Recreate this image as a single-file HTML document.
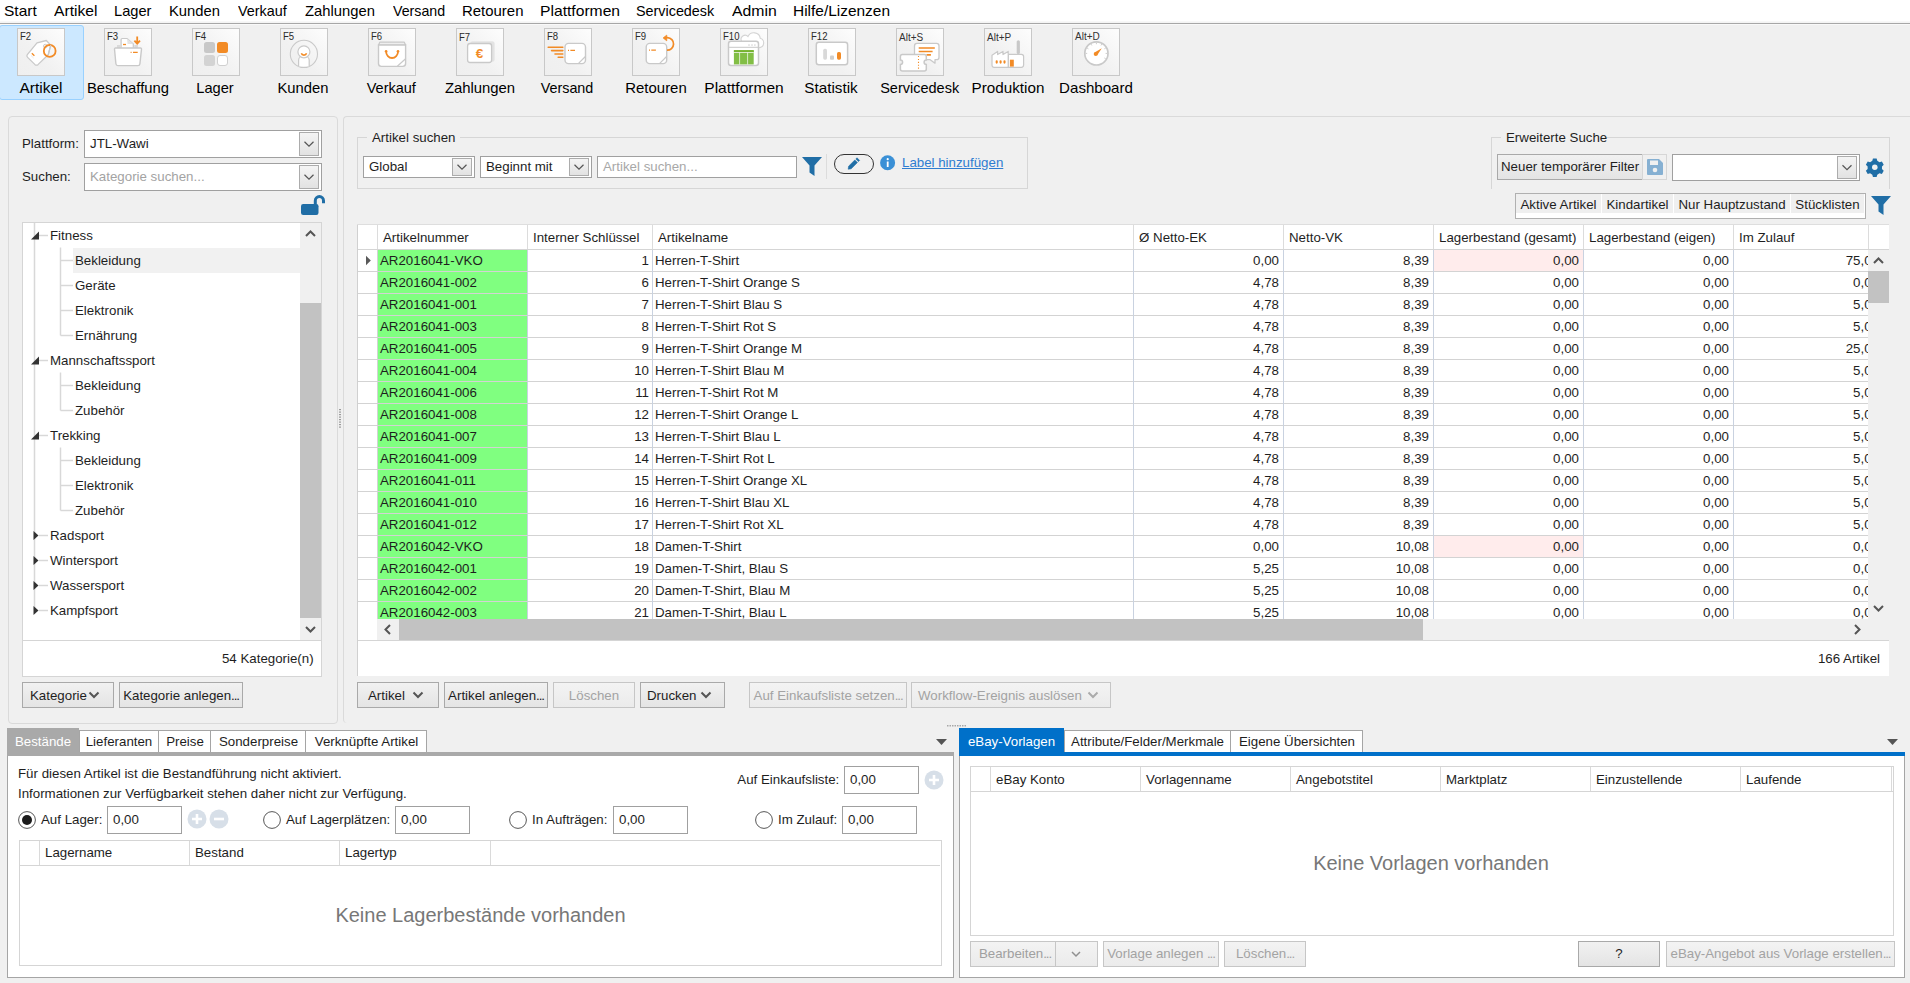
<!DOCTYPE html><html><head><meta charset="utf-8"><style>
html,body{margin:0;padding:0;}
body{width:1910px;height:983px;position:relative;overflow:hidden;background:#f0f0f0;font-family:"Liberation Sans",sans-serif;}
.a{position:absolute;}
.t{position:absolute;white-space:nowrap;font-family:"Liberation Sans",sans-serif;}
svg{overflow:visible}
</style></head><body>
<div class="a" style="left:0px;top:0px;width:1910px;height:23px;background:#fff;"></div>
<div class="a" style="left:0px;top:21px;width:1910px;height:2px;background:linear-gradient(#fafafa,#f2f2f2);"></div>
<div class="a" style="left:0px;top:23px;width:1910px;height:1px;background:#a7a7a7;"></div>
<div class="a" style="left:0px;top:24px;width:1910px;height:1px;background:#f9f9f9;"></div>
<div class="t" style="left:4px;top:4.02px;font-size:14.5px;line-height:14.5px;color:#000;transform:scaleX(1.07);transform-origin:0 0;">Start</div>
<div class="t" style="left:54px;top:4.02px;font-size:14.5px;line-height:14.5px;color:#000;transform:scaleX(1.08);transform-origin:0 0;">Artikel</div>
<div class="t" style="left:114px;top:4.02px;font-size:14.5px;line-height:14.5px;color:#000;transform:scaleX(1.01);transform-origin:0 0;">Lager</div>
<div class="t" style="left:169.4px;top:4.02px;font-size:14.5px;line-height:14.5px;color:#000;transform:scaleX(1.02);transform-origin:0 0;">Kunden</div>
<div class="t" style="left:238px;top:4.02px;font-size:14.5px;line-height:14.5px;color:#000;transform:scaleX(0.99);transform-origin:0 0;">Verkauf</div>
<div class="t" style="left:305px;top:4.02px;font-size:14.5px;line-height:14.5px;color:#000;transform:scaleX(1.02);transform-origin:0 0;">Zahlungen</div>
<div class="t" style="left:393px;top:4.02px;font-size:14.5px;line-height:14.5px;color:#000;transform:scaleX(0.98);transform-origin:0 0;">Versand</div>
<div class="t" style="left:462px;top:4.02px;font-size:14.5px;line-height:14.5px;color:#000;transform:scaleX(1.03);transform-origin:0 0;">Retouren</div>
<div class="t" style="left:540px;top:4.02px;font-size:14.5px;line-height:14.5px;color:#000;transform:scaleX(1.08);transform-origin:0 0;">Plattformen</div>
<div class="t" style="left:636px;top:4.02px;font-size:14.5px;line-height:14.5px;color:#000;transform:scaleX(0.99);transform-origin:0 0;">Servicedesk</div>
<div class="t" style="left:732px;top:4.02px;font-size:14.5px;line-height:14.5px;color:#000;transform:scaleX(1.09);transform-origin:0 0;">Admin</div>
<div class="t" style="left:793px;top:4.02px;font-size:14.5px;line-height:14.5px;color:#000;transform:scaleX(1.065);transform-origin:0 0;">Hilfe/Lizenzen</div>
<div class="a" style="left:-1px;top:25px;width:83px;height:73px;background:#cce8ff;border:1px solid #99d1ff;border-radius:3px;"></div>
<div class="a" style="left:17px;top:28px;width:46px;height:46px;background:linear-gradient(to bottom left,#fdfdfd,#f1f1f1 60%,#efefef);border:1px solid #c8c8c8;"></div>
<svg class="a" style="left:17px;top:28px" width="48" height="48" viewBox="0 0 48 48"><path d="M10.3 26.6 L20 14.8 L29.3 12.5 L33.7 17.1 L31.2 26.8 L21.2 36.4 Q19.5 37.9 17.8 36.4 L10.6 29.4 Q9.2 28 10.3 26.6 Z" fill="#fff" stroke="#c9c9c9" stroke-width="1.3" stroke-linejoin="round"/><circle cx="28.3" cy="18.1" r="1.8" fill="none" stroke="#c9c9c9" stroke-width="1"/><path d="M14.8 25.2 L17.4 27.7" stroke="#f28b26" stroke-width="1.3"/><path d="M14 27.5 L16.6 30" stroke="#e2e2e2" stroke-width="0.8"/><circle cx="32.7" cy="22.9" r="5.9" fill="none" stroke="#f28b26" stroke-width="1.8"/><path d="M33.7 17.1 L31.2 26.8" stroke="#c9c9c9" stroke-width="1.2"/></svg>
<div class="t" style="left:20.3px;top:31.02px;font-size:10.6px;line-height:10.6px;color:#2a2a2a;transform:scaleX(0.9);transform-origin:0 0;">F2</div>
<div class="t" style="left:-258.8px;width:600px;top:80.62px;font-size:14.5px;line-height:14.5px;color:#000;text-align:center;transform:scaleX(1.07);transform-origin:50% 0;">Artikel</div>
<div class="a" style="left:104px;top:28px;width:46px;height:46px;background:linear-gradient(to bottom left,#fdfdfd,#f1f1f1 60%,#efefef);border:1px solid #c8c8c8;"></div>
<svg class="a" style="left:104px;top:28px" width="48" height="48" viewBox="0 0 48 48"><path d="M17.1 19.8 V11.5 a1 1 0 0 1 1 -1 h5 l6.2 5.6 V19.8" fill="#fff" stroke="#c9c9c9" stroke-width="1.2"/><path d="M23.1 10.6 L23.5 16.1 L29.3 16.1 Z" fill="#e4e4e4"/><path d="M19 16.5 h3" stroke="#f28b26" stroke-width="1.3"/><rect x="13" y="17" width="3.6" height="3" fill="#dadada"/><rect x="30.3" y="17" width="3.6" height="3" fill="#dadada"/><path d="M33.2 8.5 V15 M30.4 12.6 L33.2 15.6 L36 12.6" fill="none" stroke="#f28b26" stroke-width="1.8"/><path d="M11.5 20 h25 a1 1 0 0 1 1 1.2 l-1.6 14.6 a2 2 0 0 1 -2 1.8 h-20 a2 2 0 0 1 -2 -1.8 l-1.4 -14.6 a1 1 0 0 1 1 -1.2 z" fill="#fff" stroke="#c9c9c9" stroke-width="1.4"/><path d="M26.6 24.4 h1 M29 24.4 h4.7" stroke="#f28b26" stroke-width="1.4"/></svg>
<div class="t" style="left:107.3px;top:31.02px;font-size:10.6px;line-height:10.6px;color:#2a2a2a;transform:scaleX(0.9);transform-origin:0 0;">F3</div>
<div class="t" style="left:-172.2px;width:600px;top:80.62px;font-size:14.5px;line-height:14.5px;color:#000;text-align:center;transform:scaleX(1.02);transform-origin:50% 0;">Beschaffung</div>
<div class="a" style="left:192px;top:28px;width:46px;height:46px;background:linear-gradient(to bottom left,#fdfdfd,#f1f1f1 60%,#efefef);border:1px solid #c8c8c8;"></div>
<svg class="a" style="left:192px;top:28px" width="48" height="48" viewBox="0 0 48 48"><rect x="12" y="14" width="11" height="11" rx="2.5" fill="#c8c8c8"/><rect x="25" y="14" width="11" height="11" rx="2.5" fill="#f28b26"/><rect x="12" y="27" width="11" height="11" rx="2.5" fill="#d3d3d3"/><rect x="25.5" y="27.5" width="10" height="10" rx="2.5" fill="#fff" stroke="#d0d0d0" stroke-width="1"/></svg>
<div class="t" style="left:195.3px;top:31.02px;font-size:10.6px;line-height:10.6px;color:#2a2a2a;transform:scaleX(0.9);transform-origin:0 0;">F4</div>
<div class="t" style="left:-85.0px;width:600px;top:80.62px;font-size:14.5px;line-height:14.5px;color:#000;text-align:center;transform:scaleX(1.01);transform-origin:50% 0;">Lager</div>
<div class="a" style="left:280px;top:28px;width:46px;height:46px;background:linear-gradient(to bottom left,#fdfdfd,#f1f1f1 60%,#efefef);border:1px solid #c8c8c8;"></div>
<svg class="a" style="left:280px;top:28px" width="48" height="48" viewBox="0 0 48 48"><circle cx="23.9" cy="25.9" r="13.6" fill="none" stroke="#c9c9c9" stroke-width="1.1"/><path d="M18.6 38.2 V32 a5.3 4 0 0 1 10.6 0 V38.2" fill="#fff" stroke="#c9c9c9" stroke-width="1.2"/><circle cx="23.9" cy="23.8" r="6" fill="#fff" stroke="#c9c9c9" stroke-width="1.2"/><path d="M21.4 25.3 a2.6 2.3 0 0 0 5.1 0" fill="none" stroke="#f28b26" stroke-width="1.6"/></svg>
<div class="t" style="left:283.3px;top:31.02px;font-size:10.6px;line-height:10.6px;color:#2a2a2a;transform:scaleX(0.9);transform-origin:0 0;">F5</div>
<div class="t" style="left:3.3999999999999773px;width:600px;top:80.62px;font-size:14.5px;line-height:14.5px;color:#000;text-align:center;transform:scaleX(1.02);transform-origin:50% 0;">Kunden</div>
<div class="a" style="left:368px;top:28px;width:46px;height:46px;background:linear-gradient(to bottom left,#fdfdfd,#f1f1f1 60%,#efefef);border:1px solid #c8c8c8;"></div>
<svg class="a" style="left:368px;top:28px" width="48" height="48" viewBox="0 0 48 48"><path d="M11.8 14.2 h24.5 l1.3 2.9 h-27.1 z" fill="#eee" stroke="#c9c9c9" stroke-width="1.2" stroke-linejoin="round"/><path d="M10.5 17 h27.1 v18.6 a2.8 2.8 0 0 1 -2.8 2.8 h-21.5 a2.8 2.8 0 0 1 -2.8 -2.8 z" fill="#fff" stroke="#c9c9c9" stroke-width="1.4"/><path d="M29.3 38.2 L37.3 31" stroke="#c9c9c9" stroke-width="1.2"/><path d="M18.1 23.4 a5.95 6.6 0 0 0 11.9 0" fill="none" stroke="#f28b26" stroke-width="1.8"/><circle cx="18.1" cy="23.3" r="1.3" fill="#f28b26"/><circle cx="30" cy="23.3" r="1.3" fill="#f28b26"/></svg>
<div class="t" style="left:371.3px;top:31.02px;font-size:10.6px;line-height:10.6px;color:#2a2a2a;transform:scaleX(0.9);transform-origin:0 0;">F6</div>
<div class="t" style="left:91.30000000000001px;width:600px;top:80.62px;font-size:14.5px;line-height:14.5px;color:#000;text-align:center;transform:scaleX(1.0);transform-origin:50% 0;">Verkauf</div>
<div class="a" style="left:456px;top:28px;width:46px;height:46px;background:linear-gradient(to bottom left,#fdfdfd,#f1f1f1 60%,#efefef);border:1px solid #c8c8c8;"></div>
<svg class="a" style="left:456px;top:28px" width="48" height="48" viewBox="0 0 48 48"><rect x="14.2" y="13.2" width="24.4" height="20.5" rx="2.5" fill="#e3e3e3"/><rect x="11.6" y="15.5" width="24" height="19" rx="2.5" fill="#fff" stroke="#c9c9c9" stroke-width="1.3"/><text x="23.4" y="29.6" font-family="Liberation Sans" font-weight="bold" font-size="13.5" fill="#f28b26" text-anchor="middle">€</text></svg>
<div class="t" style="left:459.3px;top:31.72px;font-size:10.6px;line-height:10.6px;color:#2a2a2a;transform:scaleX(0.9);transform-origin:0 0;">F7</div>
<div class="t" style="left:179.5px;width:600px;top:80.62px;font-size:14.5px;line-height:14.5px;color:#000;text-align:center;transform:scaleX(1.025);transform-origin:50% 0;">Zahlungen</div>
<div class="a" style="left:544px;top:28px;width:46px;height:46px;background:linear-gradient(to bottom left,#fdfdfd,#f1f1f1 60%,#efefef);border:1px solid #c8c8c8;"></div>
<svg class="a" style="left:544px;top:28px" width="48" height="48" viewBox="0 0 48 48"><path d="M4.2 19.3 h14.6 M7.6 22.6 h11.2 M11 26 h7.8 M14.2 29.3 h4.6" stroke="#f28b26" stroke-width="1.6" stroke-linecap="round"/><rect x="21" y="15.4" width="20.5" height="20.2" rx="3.6" fill="#fff" stroke="#c9c9c9" stroke-width="1.4"/><path d="M34.3 35.6 L41.4 28.5" stroke="#c9c9c9" stroke-width="1.2"/><path d="M24 22.4 h1 M26.4 22.4 h4.6" stroke="#f28b26" stroke-width="1.3"/></svg>
<div class="t" style="left:547.3px;top:31.02px;font-size:10.6px;line-height:10.6px;color:#2a2a2a;transform:scaleX(0.9);transform-origin:0 0;">F8</div>
<div class="t" style="left:267.20000000000005px;width:600px;top:80.62px;font-size:14.5px;line-height:14.5px;color:#000;text-align:center;transform:scaleX(0.99);transform-origin:50% 0;">Versand</div>
<div class="a" style="left:632px;top:28px;width:46px;height:46px;background:linear-gradient(to bottom left,#fdfdfd,#f1f1f1 60%,#efefef);border:1px solid #c8c8c8;"></div>
<svg class="a" style="left:632px;top:28px" width="48" height="48" viewBox="0 0 48 48"><rect x="14.2" y="15.4" width="20.5" height="20.2" rx="3.6" fill="#fff" stroke="#c9c9c9" stroke-width="1.4"/><path d="M27.5 35.6 L34.6 28.5" stroke="#c9c9c9" stroke-width="1.2"/><path d="M17 22.2 h1 M19.3 22.2 h4.6" stroke="#f28b26" stroke-width="1.3"/><path d="M35 22.2 A6.3 6.3 0 0 0 35.5 9.6 L33.5 9.7" fill="none" stroke="#f28b26" stroke-width="1.7"/><path d="M31 9.9 L34.8 7 L34.8 12.9 Z" fill="#f28b26" stroke="#f28b26" stroke-width="0.6" stroke-linejoin="round"/></svg>
<div class="t" style="left:635.3px;top:31.02px;font-size:10.6px;line-height:10.6px;color:#2a2a2a;transform:scaleX(0.9);transform-origin:0 0;">F9</div>
<div class="t" style="left:355.5px;width:600px;top:80.62px;font-size:14.5px;line-height:14.5px;color:#000;text-align:center;transform:scaleX(1.03);transform-origin:50% 0;">Retouren</div>
<div class="a" style="left:720px;top:28px;width:46px;height:46px;background:linear-gradient(to bottom left,#fdfdfd,#f1f1f1 60%,#efefef);border:1px solid #c8c8c8;"></div>
<svg class="a" style="left:720px;top:28px" width="48" height="48" viewBox="0 0 48 48"><path d="M21.5 13 a4 4 0 0 1 6.5 -4.5 a6.5 6.5 0 0 1 12.3 1.8 a4.8 4.8 0 0 1 -0.5 9.3 h-4" fill="#fff" stroke="#d4d4d4" stroke-width="1.1"/><rect x="8.5" y="13.2" width="30" height="24.4" rx="2.5" fill="#fff" stroke="#c9c9c9" stroke-width="1.5"/><path d="M9 19.3 h29" stroke="#c9c9c9" stroke-width="1"/><circle cx="29" cy="17.1" r="0.8" fill="#d4d4d4"/><circle cx="32" cy="17.1" r="0.8" fill="#d4d4d4"/><circle cx="34.9" cy="17.1" r="0.8" fill="#d4d4d4"/><rect x="13.9" y="22.2" width="19.8" height="14.2" fill="#82be45"/><rect x="13.9" y="22.2" width="19.8" height="1.8" fill="#76b22f"/><path d="M13.9 24.5 h19.8 M19.6 24.5 v12 M27.6 24.5 v12" stroke="#fff" stroke-width="0.7"/></svg>
<div class="t" style="left:723.3px;top:31.02px;font-size:10.6px;line-height:10.6px;color:#2a2a2a;transform:scaleX(0.9);transform-origin:0 0;">F10</div>
<div class="t" style="left:443.5px;width:600px;top:80.62px;font-size:14.5px;line-height:14.5px;color:#000;text-align:center;transform:scaleX(1.07);transform-origin:50% 0;">Plattformen</div>
<div class="a" style="left:808px;top:28px;width:46px;height:46px;background:linear-gradient(to bottom left,#fdfdfd,#f1f1f1 60%,#efefef);border:1px solid #c8c8c8;"></div>
<svg class="a" style="left:808px;top:28px" width="48" height="48" viewBox="0 0 48 48"><rect x="8.3" y="14.2" width="31.3" height="22.6" rx="2.5" fill="#fff" stroke="#c9c9c9" stroke-width="1.5"/><rect x="15.2" y="20.7" width="3.8" height="11" rx="1.6" fill="#d9d9d9"/><rect x="22" y="27.4" width="4" height="4.3" rx="1" fill="#cfcfcf"/><rect x="29" y="23.9" width="4" height="7.8" rx="1.6" fill="#f28b26"/></svg>
<div class="t" style="left:811.3px;top:31.02px;font-size:10.6px;line-height:10.6px;color:#2a2a2a;transform:scaleX(0.9);transform-origin:0 0;">F12</div>
<div class="t" style="left:531.2px;width:600px;top:80.62px;font-size:14.5px;line-height:14.5px;color:#000;text-align:center;transform:scaleX(1.05);transform-origin:50% 0;">Statistik</div>
<div class="a" style="left:896px;top:28px;width:46px;height:46px;background:linear-gradient(to bottom left,#fdfdfd,#f1f1f1 60%,#efefef);border:1px solid #c8c8c8;"></div>
<svg class="a" style="left:896px;top:28px" width="48" height="48" viewBox="0 0 48 48"><path d="M21 15.4 h19.5 a2.5 2.5 0 0 1 2.5 2.5 v11.3 a2.5 2.5 0 0 1 -2.5 2.5 h-1.5 v3.5 l-4.8 -3.5 h-13.2 a2.5 2.5 0 0 1 -2.5 -2.5 v-11.3 a2.5 2.5 0 0 1 2.5 -2.5 z" fill="#fff" stroke="#c9c9c9" stroke-width="1.3" stroke-linejoin="round"/><path d="M22.7 20 h16.1 M22.7 23.5 h13.9 M30.5 26.9 h4.4" stroke="#f28b26" stroke-width="1.6"/><path d="M6.4 26.4 h21.9 a2 2 0 0 1 2 2 v3.6 a2.2 2.2 0 0 0 0 4.4 v4.6 a2 2 0 0 1 -2 2 h-21.9 a2 2 0 0 1 -2 -2 v-4.6 a2.2 2.2 0 0 0 0 -4.4 v-3.6 a2 2 0 0 1 2 -2 z" fill="#fff" stroke="#c9c9c9" stroke-width="1.5"/><path d="M22.5 28 v13" stroke="#f28b26" stroke-width="1.1" stroke-dasharray="1.1 1.8"/></svg>
<div class="t" style="left:899px;top:33.43px;font-size:10px;line-height:10px;color:#333;">Alt+S</div>
<div class="t" style="left:619.7px;width:600px;top:80.62px;font-size:14.5px;line-height:14.5px;color:#000;text-align:center;transform:scaleX(1.0);transform-origin:50% 0;">Servicedesk</div>
<div class="a" style="left:984px;top:28px;width:46px;height:46px;background:linear-gradient(to bottom left,#fdfdfd,#f1f1f1 60%,#efefef);border:1px solid #c8c8c8;"></div>
<svg class="a" style="left:984px;top:28px" width="48" height="48" viewBox="0 0 48 48"><rect x="32.7" y="12.2" width="3.2" height="14" rx="1.6" fill="#c8c8c8"/><path d="M24.4 26.4 h13 a2.2 2.2 0 0 1 2.2 2.2 v8.5 a2.2 2.2 0 0 1 -2.2 2.2 h-13 z" fill="#fff" stroke="#c9c9c9" stroke-width="1.2"/><path d="M8 27.2 L13.6 23.4 V26.6 L19 23.4 V26.6 L24.2 23.4 V39.3 H10 a2 2 0 0 1 -2 -2 z" fill="#fff" stroke="#c9c9c9" stroke-width="1.2" stroke-linejoin="round"/><path d="M12.7 33.2 v1.4 M16.6 33.2 v1.4 M20.5 33.2 v1.4" stroke="#f28b26" stroke-width="2.1" stroke-linecap="round"/><rect x="25.9" y="31.7" width="3.9" height="6.9" fill="#f28b26"/></svg>
<div class="t" style="left:987px;top:33.43px;font-size:10px;line-height:10px;color:#333;">Alt+P</div>
<div class="t" style="left:707.5px;width:600px;top:80.62px;font-size:14.5px;line-height:14.5px;color:#000;text-align:center;transform:scaleX(1.05);transform-origin:50% 0;">Produktion</div>
<div class="a" style="left:1072px;top:28px;width:46px;height:46px;background:linear-gradient(to bottom left,#fdfdfd,#f1f1f1 60%,#efefef);border:1px solid #c8c8c8;"></div>
<svg class="a" style="left:1072px;top:28px" width="48" height="48" viewBox="0 0 48 48"><circle cx="24.4" cy="25.4" r="11.6" fill="#fff" stroke="#c9c9c9" stroke-width="1.7"/><g stroke="#cdcdcd" stroke-width="1"><path d="M15.20 25.40 L13.60 25.40"/><path d="M16.43 20.80 L15.05 20.00"/><path d="M19.80 17.43 L19.00 16.05"/><path d="M24.40 16.20 L24.40 14.60"/><path d="M29.00 17.43 L29.80 16.05"/><path d="M32.37 20.80 L33.75 20.00"/><path d="M33.60 25.40 L35.20 25.40"/><path d="M32.37 30.00 L33.75 30.80"/></g><path d="M22.5 24.6 L29.8 20.2 L25 27.6 Z" fill="#f28b26"/><circle cx="23.7" cy="26" r="2" fill="#f28b26"/></svg>
<div class="t" style="left:1075px;top:32.23px;font-size:10px;line-height:10px;color:#333;">Alt+D</div>
<div class="t" style="left:795.5999999999999px;width:600px;top:80.62px;font-size:14.5px;line-height:14.5px;color:#000;text-align:center;transform:scaleX(1.04);transform-origin:50% 0;">Dashboard</div>
<div class="a" style="left:8px;top:116px;width:328px;height:606px;border:1px solid #dadada;border-radius:4px;"></div>
<div class="t" style="left:22px;top:136.74px;font-size:13.3px;line-height:13.3px;color:#1e1e1e;">Plattform:</div>
<div class="a" style="left:84px;top:130px;width:236px;height:26px;background:#fff;border:1px solid #a0a0a0;"></div>
<div class="a" style="left:299px;top:132px;width:18px;height:22px;background:linear-gradient(#f4f4f4,#e2e2e2);border:1px solid #acacac;"></div>
<svg class="a" style="left:299px;top:132px" width="20" height="24" viewBox="0 0 20 24"><path d="M5.5 9.75 L10 14.25 L14.5 9.75" fill="none" stroke="#555" stroke-width="1.2"/></svg>
<div class="t" style="left:90px;top:137.24px;font-size:13.3px;line-height:13.3px;color:#1e1e1e;">JTL-Wawi</div>
<div class="t" style="left:22px;top:170.24px;font-size:13.3px;line-height:13.3px;color:#1e1e1e;">Suchen:</div>
<div class="a" style="left:84px;top:163px;width:236px;height:26px;background:#fff;border:1px solid #a0a0a0;"></div>
<div class="a" style="left:299px;top:165px;width:18px;height:22px;background:linear-gradient(#f4f4f4,#e2e2e2);border:1px solid #acacac;"></div>
<svg class="a" style="left:299px;top:165px" width="20" height="24" viewBox="0 0 20 24"><path d="M5.5 9.75 L10 14.25 L14.5 9.75" fill="none" stroke="#555" stroke-width="1.2"/></svg>
<div class="t" style="left:90px;top:170.24px;font-size:13.3px;line-height:13.3px;color:#a3a3a3;">Kategorie suchen...</div>
<svg class="a" style="left:300px;top:195px" width="24" height="22" viewBox="0 0 24 22"><path d="M15.3 9.5 v-3.8 a4.1 4.1 0 0 1 8.2 0 v2.6" fill="none" stroke="#206ea6" stroke-width="3"/><rect x="1" y="9" width="17.5" height="11" rx="2.2" fill="#206ea6"/></svg>
<div class="a" style="left:22px;top:222px;width:298px;height:453px;background:#fff;border:1px solid #d5d5d5;"></div>
<div class="a" style="left:23px;top:640px;width:298px;height:1px;background:#d5d5d5;"></div>
<div class="t" style="right:1596.4px;top:652.14px;font-size:13.3px;line-height:13.3px;color:#1e1e1e;text-align:right;">54 Kategorie(n)</div>
<div class="a" style="left:300px;top:223px;width:21px;height:417px;background:#f0f0f0;"></div>
<div class="a" style="left:300px;top:303px;width:21px;height:315px;background:#c2c2c2;"></div>
<svg class="a" style="left:300px;top:223px" width="21" height="20" viewBox="0 0 21 20"><path d="M6 13 L10.5 8.5 L15 13" fill="none" stroke="#555" stroke-width="2"/></svg>
<svg class="a" style="left:300px;top:619px" width="21" height="21" viewBox="0 0 21 21"><path d="M6 8 L10.5 12.5 L15 8" fill="none" stroke="#555" stroke-width="2"/></svg>
<div class="a" style="left:73px;top:248px;width:227px;height:25px;background:#f1f1f1;"></div>
<div class="t" style="left:50px;top:229.04px;font-size:13.3px;line-height:13.3px;color:#1e1e1e;">Fitness</div>
<div class="t" style="left:75px;top:254.04px;font-size:13.3px;line-height:13.3px;color:#1e1e1e;">Bekleidung</div>
<div class="t" style="left:75px;top:279.04px;font-size:13.3px;line-height:13.3px;color:#1e1e1e;">Geräte</div>
<div class="t" style="left:75px;top:304.04px;font-size:13.3px;line-height:13.3px;color:#1e1e1e;">Elektronik</div>
<div class="t" style="left:75px;top:329.04px;font-size:13.3px;line-height:13.3px;color:#1e1e1e;">Ernährung</div>
<div class="t" style="left:50px;top:354.04px;font-size:13.3px;line-height:13.3px;color:#1e1e1e;">Mannschaftssport</div>
<div class="t" style="left:75px;top:379.04px;font-size:13.3px;line-height:13.3px;color:#1e1e1e;">Bekleidung</div>
<div class="t" style="left:75px;top:404.04px;font-size:13.3px;line-height:13.3px;color:#1e1e1e;">Zubehör</div>
<div class="t" style="left:50px;top:429.04px;font-size:13.3px;line-height:13.3px;color:#1e1e1e;">Trekking</div>
<div class="t" style="left:75px;top:454.04px;font-size:13.3px;line-height:13.3px;color:#1e1e1e;">Bekleidung</div>
<div class="t" style="left:75px;top:479.04px;font-size:13.3px;line-height:13.3px;color:#1e1e1e;">Elektronik</div>
<div class="t" style="left:75px;top:504.04px;font-size:13.3px;line-height:13.3px;color:#1e1e1e;">Zubehör</div>
<div class="t" style="left:50px;top:529.04px;font-size:13.3px;line-height:13.3px;color:#1e1e1e;">Radsport</div>
<div class="t" style="left:50px;top:554.04px;font-size:13.3px;line-height:13.3px;color:#1e1e1e;">Wintersport</div>
<div class="t" style="left:50px;top:579.04px;font-size:13.3px;line-height:13.3px;color:#1e1e1e;">Wassersport</div>
<div class="t" style="left:50px;top:604.04px;font-size:13.3px;line-height:13.3px;color:#1e1e1e;">Kampfsport</div>
<svg class="a" style="left:0px;top:0px" width="300" height="983" viewBox="0 0 300 983"><path d="M34.5 223 V610" stroke="#d8d8d8" stroke-width="1.5"/><path d="M39 235.5 H48" stroke="#d8d8d8" stroke-width="1.5"/><path d="M31 239.5 L39 239.5 L39 231.5 Z" fill="#333"/><path d="M60.5 260.5 H73" stroke="#d8d8d8" stroke-width="1.5"/><path d="M60.5 285.5 H73" stroke="#d8d8d8" stroke-width="1.5"/><path d="M60.5 310.5 H73" stroke="#d8d8d8" stroke-width="1.5"/><path d="M60.5 335.5 H73" stroke="#d8d8d8" stroke-width="1.5"/><path d="M39 360.5 H48" stroke="#d8d8d8" stroke-width="1.5"/><path d="M31 364.5 L39 364.5 L39 356.5 Z" fill="#333"/><path d="M60.5 385.5 H73" stroke="#d8d8d8" stroke-width="1.5"/><path d="M60.5 410.5 H73" stroke="#d8d8d8" stroke-width="1.5"/><path d="M39 435.5 H48" stroke="#d8d8d8" stroke-width="1.5"/><path d="M31 439.5 L39 439.5 L39 431.5 Z" fill="#333"/><path d="M60.5 460.5 H73" stroke="#d8d8d8" stroke-width="1.5"/><path d="M60.5 485.5 H73" stroke="#d8d8d8" stroke-width="1.5"/><path d="M60.5 510.5 H73" stroke="#d8d8d8" stroke-width="1.5"/><path d="M39 535.5 H48" stroke="#d8d8d8" stroke-width="1.5"/><path d="M33.5 531.0 L38.5 535.5 L33.5 540.0 Z" fill="#333"/><path d="M39 560.5 H48" stroke="#d8d8d8" stroke-width="1.5"/><path d="M33.5 556.0 L38.5 560.5 L33.5 565.0 Z" fill="#333"/><path d="M39 585.5 H48" stroke="#d8d8d8" stroke-width="1.5"/><path d="M33.5 581.0 L38.5 585.5 L33.5 590.0 Z" fill="#333"/><path d="M39 610.5 H48" stroke="#d8d8d8" stroke-width="1.5"/><path d="M33.5 606.0 L38.5 610.5 L33.5 615.0 Z" fill="#333"/><path d="M60.5 247.5 V335.5" stroke="#d8d8d8" stroke-width="1.5"/><path d="M60.5 372.5 V410.5" stroke="#d8d8d8" stroke-width="1.5"/><path d="M60.5 447.5 V510.5" stroke="#d8d8d8" stroke-width="1.5"/></svg>
<div class="a" style="left:22px;top:682px;width:90px;height:24px;background:linear-gradient(#f1f1f1,#e4e4e4);border:1px solid #a9a9a9;"></div>
<div class="t" style="left:30px;top:688.54px;font-size:13.3px;line-height:13.3px;color:#1e1e1e;">Kategorie</div>
<svg class="a" style="left:88px;top:690px" width="12" height="10" viewBox="0 0 12 10"><path d="M1.5 2.5 L6 7 L10.5 2.5" fill="none" stroke="#555" stroke-width="2"/></svg>
<div class="a" style="left:119px;top:682px;width:122px;height:24px;background:linear-gradient(#f1f1f1,#e4e4e4);border:1px solid #a9a9a9;"></div>
<div class="t" style="left:-119.0px;width:600px;top:688.54px;font-size:13.3px;line-height:13.3px;color:#1e1e1e;text-align:center;">Kategorie anlegen<span style="letter-spacing:-1.1px">...</span></div>
<svg class="a" style="left:339px;top:409px" width="3" height="20" viewBox="0 0 3 20"><rect x="0" y="0.0" width="2" height="1.2" fill="#9a9a9a"/><rect x="0" y="2.5" width="2" height="1.2" fill="#9a9a9a"/><rect x="0" y="5.0" width="2" height="1.2" fill="#9a9a9a"/><rect x="0" y="7.5" width="2" height="1.2" fill="#9a9a9a"/><rect x="0" y="10.0" width="2" height="1.2" fill="#9a9a9a"/><rect x="0" y="12.5" width="2" height="1.2" fill="#9a9a9a"/><rect x="0" y="15.0" width="2" height="1.2" fill="#9a9a9a"/><rect x="0" y="17.5" width="2" height="1.2" fill="#9a9a9a"/></svg>
<div class="a" style="left:343px;top:116px;width:1600px;height:606px;border:1px solid #dadada;border-right:none;border-bottom:none;border-radius:4px 0 0 4px;"></div>
<div class="a" style="left:357px;top:137px;width:669px;height:50px;border:1px solid #d6d6d6;"></div>
<div class="a" style="left:367px;top:130px;width:93px;height:14px;background:#f0f0f0;"></div>
<div class="t" style="left:372px;top:130.74px;font-size:13.3px;line-height:13.3px;color:#1e1e1e;">Artikel suchen</div>
<div class="a" style="left:363px;top:156px;width:110px;height:20px;background:#fff;border:1px solid #a0a0a0;"></div>
<div class="a" style="left:452px;top:158px;width:18px;height:16px;background:linear-gradient(#f4f4f4,#e2e2e2);border:1px solid #acacac;"></div>
<svg class="a" style="left:452px;top:158px" width="20" height="18" viewBox="0 0 20 18"><path d="M5.5 6.75 L10 11.25 L14.5 6.75" fill="none" stroke="#555" stroke-width="1.2"/></svg>
<div class="t" style="left:369px;top:159.54px;font-size:13.3px;line-height:13.3px;color:#1e1e1e;">Global</div>
<div class="a" style="left:480px;top:156px;width:110px;height:20px;background:#fff;border:1px solid #a0a0a0;"></div>
<div class="a" style="left:569px;top:158px;width:18px;height:16px;background:linear-gradient(#f4f4f4,#e2e2e2);border:1px solid #acacac;"></div>
<svg class="a" style="left:569px;top:158px" width="20" height="18" viewBox="0 0 20 18"><path d="M5.5 6.75 L10 11.25 L14.5 6.75" fill="none" stroke="#555" stroke-width="1.2"/></svg>
<div class="t" style="left:486px;top:159.54px;font-size:13.3px;line-height:13.3px;color:#1e1e1e;">Beginnt mit</div>
<div class="a" style="left:597px;top:156px;width:198px;height:20px;background:#fff;border:1px solid #a0a0a0;"></div>
<div class="t" style="left:603px;top:159.54px;font-size:13.3px;line-height:13.3px;color:#a8a8a8;">Artikel suchen...</div>
<svg class="a" style="left:802px;top:157px" width="20" height="19" viewBox="0 0 20 19"><path d="M0 0 H20 L12.5 8.5 V19 L7.5 15.5 V8.5 Z" fill="#206ea6"/></svg>
<div class="a" style="left:826px;top:154px;width:1px;height:25px;background:#dcdcdc;"></div>
<div class="a" style="left:834px;top:154px;width:38px;height:18px;border:1px solid #333;border-radius:10px;background:#f0f0f0;"></div>
<svg class="a" style="left:845px;top:157px" width="18" height="14" viewBox="0 0 18 14"><path d="M3.2 12.2 L3.6 9.2 L9.8 3 L12.4 5.6 L6.2 11.8 Z M10.8 2 L12 0.8 L14.6 3.4 L13.4 4.6 Z" fill="#206ea6" stroke="#206ea6" stroke-width="0.6" stroke-linejoin="round"/></svg>
<svg class="a" style="left:880px;top:155px" width="16" height="16" viewBox="0 0 16 16"><circle cx="7.6" cy="7.7" r="7.5" fill="#3a90d6"/><rect x="6.8" y="6.5" width="1.8" height="5.5" fill="#fff"/><circle cx="7.7" cy="4.2" r="1.1" fill="#fff"/></svg>
<div class="t" style="left:902px;top:155.74px;font-size:13.3px;line-height:13.3px;color:#2f7dd1;text-decoration:underline;">Label hinzufügen</div>
<div class="a" style="left:1491px;top:137px;width:397px;height:51px;border:1px solid #d6d6d6;border-bottom:none;"></div>
<div class="a" style="left:1501px;top:130px;width:104px;height:14px;background:#f0f0f0;"></div>
<div class="t" style="left:1506px;top:130.74px;font-size:13.3px;line-height:13.3px;color:#1e1e1e;">Erweiterte Suche</div>
<div class="a" style="left:1497px;top:154px;width:144px;height:24px;background:linear-gradient(#f1f1f1,#e4e4e4);border:1px solid #a9a9a9;"></div>
<div class="t" style="left:1501px;top:159.54px;font-size:13.3px;line-height:13.3px;color:#1e1e1e;">Neuer temporärer Filter</div>
<div class="a" style="left:1642px;top:154px;width:23px;height:24px;background:#f0f0f0;border:1px solid #d6d6d6;"></div>
<svg class="a" style="left:1646px;top:158px" width="18" height="18" viewBox="0 0 18 18"><path d="M1 2 a1 1 0 0 1 1 -1 h11 l4 4 v11 a1 1 0 0 1 -1 1 h-14 a1 1 0 0 1 -1 -1 z" fill="#86b0d2"/><rect x="4" y="2.5" width="8" height="4.5" fill="#f0f0f0"/><circle cx="9" cy="12" r="2.3" fill="#f0f0f0"/></svg>
<div class="a" style="left:1672px;top:154px;width:186px;height:25px;background:#fff;border:1px solid #a0a0a0;"></div>
<div class="a" style="left:1837px;top:156px;width:18px;height:21px;background:linear-gradient(#f4f4f4,#e2e2e2);border:1px solid #acacac;"></div>
<svg class="a" style="left:1837px;top:156px" width="20" height="23" viewBox="0 0 20 23"><path d="M5.5 9.25 L10 13.75 L14.5 9.25" fill="none" stroke="#555" stroke-width="1.2"/></svg>
<svg class="a" style="left:1864px;top:157px" width="22" height="22" viewBox="0 0 22 22"><g transform="translate(10.8 10.2) scale(0.92)"><path d="M-2 -9.5 h4 l0.7 2.6 l2.4 1.4 l2.6 -0.7 l2 3.5 l-1.9 1.9 v2.8 l1.9 1.9 l-2 3.5 l-2.6 -0.7 l-2.4 1.4 l-0.7 2.6 h-4 l-0.7 -2.6 l-2.4 -1.4 l-2.6 0.7 l-2 -3.5 l1.9 -1.9 v-2.8 l-1.9 -1.9 l2 -3.5 l2.6 0.7 l2.4 -1.4 z" fill="#206ea6"/><circle r="3" fill="#f0f0f0"/></g></svg>
<div class="a" style="left:1515px;top:193px;width:349px;height:24px;background:#fff;border:1px solid #b0b0b0;"></div>
<div class="a" style="left:1516px;top:194px;width:85px;height:19px;background:#efefef;"></div>
<div class="t" style="left:1258.5px;width:600px;top:198.04px;font-size:13.3px;line-height:13.3px;color:#1e1e1e;text-align:center;">Aktive Artikel</div>
<div class="a" style="left:1602px;top:194px;width:71px;height:19px;background:#efefef;"></div>
<div class="t" style="left:1337.5px;width:600px;top:198.04px;font-size:13.3px;line-height:13.3px;color:#1e1e1e;text-align:center;">Kindartikel</div>
<div class="a" style="left:1674px;top:194px;width:116px;height:19px;background:#efefef;"></div>
<div class="t" style="left:1432.0px;width:600px;top:198.04px;font-size:13.3px;line-height:13.3px;color:#1e1e1e;text-align:center;">Nur Hauptzustand</div>
<div class="a" style="left:1791px;top:194px;width:73px;height:19px;background:#efefef;"></div>
<div class="t" style="left:1527.5px;width:600px;top:198.04px;font-size:13.3px;line-height:13.3px;color:#1e1e1e;text-align:center;">Stücklisten</div>
<svg class="a" style="left:1871px;top:196px" width="20" height="19" viewBox="0 0 20 19"><path d="M0 0 H20 L12.5 8.5 V19 L7.5 15.5 V8.5 Z" fill="#206ea6"/></svg>
<div class="a" style="left:357px;top:224px;width:1532px;height:452px;background:#fff;"></div>
<div class="a" style="left:357px;top:224px;width:1px;height:452px;background:#d0d0d0;"></div>
<div class="a" style="left:357px;top:224px;width:1532px;height:1px;background:#dedede;"></div>
<div class="t" style="left:383px;top:230.94px;font-size:13.3px;line-height:13.3px;color:#1e1e1e;">Artikelnummer</div>
<div class="t" style="left:533px;top:230.94px;font-size:13.3px;line-height:13.3px;color:#1e1e1e;">Interner Schlüssel</div>
<div class="t" style="left:658px;top:230.94px;font-size:13.3px;line-height:13.3px;color:#1e1e1e;">Artikelname</div>
<div class="t" style="left:1139px;top:230.94px;font-size:13.3px;line-height:13.3px;color:#1e1e1e;">Ø Netto-EK</div>
<div class="t" style="left:1289px;top:230.94px;font-size:13.3px;line-height:13.3px;color:#1e1e1e;">Netto-VK</div>
<div class="t" style="left:1439px;top:230.94px;font-size:13.3px;line-height:13.3px;color:#1e1e1e;">Lagerbestand (gesamt)</div>
<div class="t" style="left:1589px;top:230.94px;font-size:13.3px;line-height:13.3px;color:#1e1e1e;">Lagerbestand (eigen)</div>
<div class="t" style="left:1739px;top:230.94px;font-size:13.3px;line-height:13.3px;color:#1e1e1e;">Im Zulauf</div>
<div class="a" style="left:377px;top:225px;width:1px;height:24px;background:#dcdcdc;"></div>
<div class="a" style="left:527px;top:225px;width:1px;height:24px;background:#dcdcdc;"></div>
<div class="a" style="left:652px;top:225px;width:1px;height:24px;background:#dcdcdc;"></div>
<div class="a" style="left:1133px;top:225px;width:1px;height:24px;background:#dcdcdc;"></div>
<div class="a" style="left:1283px;top:225px;width:1px;height:24px;background:#dcdcdc;"></div>
<div class="a" style="left:1433px;top:225px;width:1px;height:24px;background:#dcdcdc;"></div>
<div class="a" style="left:1583px;top:225px;width:1px;height:24px;background:#dcdcdc;"></div>
<div class="a" style="left:1733px;top:225px;width:1px;height:24px;background:#dcdcdc;"></div>
<div class="a" style="left:1868px;top:225px;width:1px;height:24px;background:#dcdcdc;"></div>
<div class="a" style="left:358px;top:249px;width:1531px;height:1px;background:#d5d5d5;"></div>
<div class="a" style="left:358px;top:250px;width:1510px;height:369px;overflow:hidden;">
<div class="a" style="left:20px;top:0px;width:149px;height:21px;background:#80ff80;"></div>
<div class="a" style="left:1076px;top:0px;width:149px;height:21px;background:#ffecec;"></div>
<div class="a" style="left:0;top:21px;width:1510px;height:1px;background:#d3d3d3;"></div>
<div class="t" style="left:22px;top:3.94px;font-size:13.3px;line-height:13.3px;color:#1e1e1e;">AR2016041-VKO</div>
<div class="t" style="right:1219px;top:3.94px;font-size:13.3px;line-height:13.3px;color:#1e1e1e;text-align:right;">1</div>
<div class="t" style="left:297px;top:3.94px;font-size:13.3px;line-height:13.3px;color:#1e1e1e;">Herren-T-Shirt</div>
<div class="t" style="right:589px;top:3.94px;font-size:13.3px;line-height:13.3px;color:#1e1e1e;text-align:right;">0,00</div>
<div class="t" style="right:439px;top:3.94px;font-size:13.3px;line-height:13.3px;color:#1e1e1e;text-align:right;">8,39</div>
<div class="t" style="right:289px;top:3.94px;font-size:13.3px;line-height:13.3px;color:#1e1e1e;text-align:right;">0,00</div>
<div class="t" style="right:139px;top:3.94px;font-size:13.3px;line-height:13.3px;color:#1e1e1e;text-align:right;">0,00</div>
<div class="t" style="right:-11px;top:3.94px;font-size:13.3px;line-height:13.3px;color:#1e1e1e;text-align:right;">75,00</div>
<div class="a" style="left:20px;top:22px;width:149px;height:21px;background:#80ff80;"></div>
<div class="a" style="left:0;top:43px;width:1510px;height:1px;background:#d3d3d3;"></div>
<div class="t" style="left:22px;top:25.94px;font-size:13.3px;line-height:13.3px;color:#1e1e1e;">AR2016041-002</div>
<div class="t" style="right:1219px;top:25.94px;font-size:13.3px;line-height:13.3px;color:#1e1e1e;text-align:right;">6</div>
<div class="t" style="left:297px;top:25.94px;font-size:13.3px;line-height:13.3px;color:#1e1e1e;">Herren-T-Shirt Orange S</div>
<div class="t" style="right:589px;top:25.94px;font-size:13.3px;line-height:13.3px;color:#1e1e1e;text-align:right;">4,78</div>
<div class="t" style="right:439px;top:25.94px;font-size:13.3px;line-height:13.3px;color:#1e1e1e;text-align:right;">8,39</div>
<div class="t" style="right:289px;top:25.94px;font-size:13.3px;line-height:13.3px;color:#1e1e1e;text-align:right;">0,00</div>
<div class="t" style="right:139px;top:25.94px;font-size:13.3px;line-height:13.3px;color:#1e1e1e;text-align:right;">0,00</div>
<div class="t" style="right:-11px;top:25.94px;font-size:13.3px;line-height:13.3px;color:#1e1e1e;text-align:right;">0,00</div>
<div class="a" style="left:20px;top:44px;width:149px;height:21px;background:#80ff80;"></div>
<div class="a" style="left:0;top:65px;width:1510px;height:1px;background:#d3d3d3;"></div>
<div class="t" style="left:22px;top:47.94px;font-size:13.3px;line-height:13.3px;color:#1e1e1e;">AR2016041-001</div>
<div class="t" style="right:1219px;top:47.94px;font-size:13.3px;line-height:13.3px;color:#1e1e1e;text-align:right;">7</div>
<div class="t" style="left:297px;top:47.94px;font-size:13.3px;line-height:13.3px;color:#1e1e1e;">Herren-T-Shirt Blau S</div>
<div class="t" style="right:589px;top:47.94px;font-size:13.3px;line-height:13.3px;color:#1e1e1e;text-align:right;">4,78</div>
<div class="t" style="right:439px;top:47.94px;font-size:13.3px;line-height:13.3px;color:#1e1e1e;text-align:right;">8,39</div>
<div class="t" style="right:289px;top:47.94px;font-size:13.3px;line-height:13.3px;color:#1e1e1e;text-align:right;">0,00</div>
<div class="t" style="right:139px;top:47.94px;font-size:13.3px;line-height:13.3px;color:#1e1e1e;text-align:right;">0,00</div>
<div class="t" style="right:-11px;top:47.94px;font-size:13.3px;line-height:13.3px;color:#1e1e1e;text-align:right;">5,00</div>
<div class="a" style="left:20px;top:66px;width:149px;height:21px;background:#80ff80;"></div>
<div class="a" style="left:0;top:87px;width:1510px;height:1px;background:#d3d3d3;"></div>
<div class="t" style="left:22px;top:69.94px;font-size:13.3px;line-height:13.3px;color:#1e1e1e;">AR2016041-003</div>
<div class="t" style="right:1219px;top:69.94px;font-size:13.3px;line-height:13.3px;color:#1e1e1e;text-align:right;">8</div>
<div class="t" style="left:297px;top:69.94px;font-size:13.3px;line-height:13.3px;color:#1e1e1e;">Herren-T-Shirt Rot S</div>
<div class="t" style="right:589px;top:69.94px;font-size:13.3px;line-height:13.3px;color:#1e1e1e;text-align:right;">4,78</div>
<div class="t" style="right:439px;top:69.94px;font-size:13.3px;line-height:13.3px;color:#1e1e1e;text-align:right;">8,39</div>
<div class="t" style="right:289px;top:69.94px;font-size:13.3px;line-height:13.3px;color:#1e1e1e;text-align:right;">0,00</div>
<div class="t" style="right:139px;top:69.94px;font-size:13.3px;line-height:13.3px;color:#1e1e1e;text-align:right;">0,00</div>
<div class="t" style="right:-11px;top:69.94px;font-size:13.3px;line-height:13.3px;color:#1e1e1e;text-align:right;">5,00</div>
<div class="a" style="left:20px;top:88px;width:149px;height:21px;background:#80ff80;"></div>
<div class="a" style="left:0;top:109px;width:1510px;height:1px;background:#d3d3d3;"></div>
<div class="t" style="left:22px;top:91.94px;font-size:13.3px;line-height:13.3px;color:#1e1e1e;">AR2016041-005</div>
<div class="t" style="right:1219px;top:91.94px;font-size:13.3px;line-height:13.3px;color:#1e1e1e;text-align:right;">9</div>
<div class="t" style="left:297px;top:91.94px;font-size:13.3px;line-height:13.3px;color:#1e1e1e;">Herren-T-Shirt Orange M</div>
<div class="t" style="right:589px;top:91.94px;font-size:13.3px;line-height:13.3px;color:#1e1e1e;text-align:right;">4,78</div>
<div class="t" style="right:439px;top:91.94px;font-size:13.3px;line-height:13.3px;color:#1e1e1e;text-align:right;">8,39</div>
<div class="t" style="right:289px;top:91.94px;font-size:13.3px;line-height:13.3px;color:#1e1e1e;text-align:right;">0,00</div>
<div class="t" style="right:139px;top:91.94px;font-size:13.3px;line-height:13.3px;color:#1e1e1e;text-align:right;">0,00</div>
<div class="t" style="right:-11px;top:91.94px;font-size:13.3px;line-height:13.3px;color:#1e1e1e;text-align:right;">25,00</div>
<div class="a" style="left:20px;top:110px;width:149px;height:21px;background:#80ff80;"></div>
<div class="a" style="left:0;top:131px;width:1510px;height:1px;background:#d3d3d3;"></div>
<div class="t" style="left:22px;top:113.94px;font-size:13.3px;line-height:13.3px;color:#1e1e1e;">AR2016041-004</div>
<div class="t" style="right:1219px;top:113.94px;font-size:13.3px;line-height:13.3px;color:#1e1e1e;text-align:right;">10</div>
<div class="t" style="left:297px;top:113.94px;font-size:13.3px;line-height:13.3px;color:#1e1e1e;">Herren-T-Shirt Blau M</div>
<div class="t" style="right:589px;top:113.94px;font-size:13.3px;line-height:13.3px;color:#1e1e1e;text-align:right;">4,78</div>
<div class="t" style="right:439px;top:113.94px;font-size:13.3px;line-height:13.3px;color:#1e1e1e;text-align:right;">8,39</div>
<div class="t" style="right:289px;top:113.94px;font-size:13.3px;line-height:13.3px;color:#1e1e1e;text-align:right;">0,00</div>
<div class="t" style="right:139px;top:113.94px;font-size:13.3px;line-height:13.3px;color:#1e1e1e;text-align:right;">0,00</div>
<div class="t" style="right:-11px;top:113.94px;font-size:13.3px;line-height:13.3px;color:#1e1e1e;text-align:right;">5,00</div>
<div class="a" style="left:20px;top:132px;width:149px;height:21px;background:#80ff80;"></div>
<div class="a" style="left:0;top:153px;width:1510px;height:1px;background:#d3d3d3;"></div>
<div class="t" style="left:22px;top:135.94px;font-size:13.3px;line-height:13.3px;color:#1e1e1e;">AR2016041-006</div>
<div class="t" style="right:1219px;top:135.94px;font-size:13.3px;line-height:13.3px;color:#1e1e1e;text-align:right;">11</div>
<div class="t" style="left:297px;top:135.94px;font-size:13.3px;line-height:13.3px;color:#1e1e1e;">Herren-T-Shirt Rot M</div>
<div class="t" style="right:589px;top:135.94px;font-size:13.3px;line-height:13.3px;color:#1e1e1e;text-align:right;">4,78</div>
<div class="t" style="right:439px;top:135.94px;font-size:13.3px;line-height:13.3px;color:#1e1e1e;text-align:right;">8,39</div>
<div class="t" style="right:289px;top:135.94px;font-size:13.3px;line-height:13.3px;color:#1e1e1e;text-align:right;">0,00</div>
<div class="t" style="right:139px;top:135.94px;font-size:13.3px;line-height:13.3px;color:#1e1e1e;text-align:right;">0,00</div>
<div class="t" style="right:-11px;top:135.94px;font-size:13.3px;line-height:13.3px;color:#1e1e1e;text-align:right;">5,00</div>
<div class="a" style="left:20px;top:154px;width:149px;height:21px;background:#80ff80;"></div>
<div class="a" style="left:0;top:175px;width:1510px;height:1px;background:#d3d3d3;"></div>
<div class="t" style="left:22px;top:157.94px;font-size:13.3px;line-height:13.3px;color:#1e1e1e;">AR2016041-008</div>
<div class="t" style="right:1219px;top:157.94px;font-size:13.3px;line-height:13.3px;color:#1e1e1e;text-align:right;">12</div>
<div class="t" style="left:297px;top:157.94px;font-size:13.3px;line-height:13.3px;color:#1e1e1e;">Herren-T-Shirt Orange L</div>
<div class="t" style="right:589px;top:157.94px;font-size:13.3px;line-height:13.3px;color:#1e1e1e;text-align:right;">4,78</div>
<div class="t" style="right:439px;top:157.94px;font-size:13.3px;line-height:13.3px;color:#1e1e1e;text-align:right;">8,39</div>
<div class="t" style="right:289px;top:157.94px;font-size:13.3px;line-height:13.3px;color:#1e1e1e;text-align:right;">0,00</div>
<div class="t" style="right:139px;top:157.94px;font-size:13.3px;line-height:13.3px;color:#1e1e1e;text-align:right;">0,00</div>
<div class="t" style="right:-11px;top:157.94px;font-size:13.3px;line-height:13.3px;color:#1e1e1e;text-align:right;">5,00</div>
<div class="a" style="left:20px;top:176px;width:149px;height:21px;background:#80ff80;"></div>
<div class="a" style="left:0;top:197px;width:1510px;height:1px;background:#d3d3d3;"></div>
<div class="t" style="left:22px;top:179.94px;font-size:13.3px;line-height:13.3px;color:#1e1e1e;">AR2016041-007</div>
<div class="t" style="right:1219px;top:179.94px;font-size:13.3px;line-height:13.3px;color:#1e1e1e;text-align:right;">13</div>
<div class="t" style="left:297px;top:179.94px;font-size:13.3px;line-height:13.3px;color:#1e1e1e;">Herren-T-Shirt Blau L</div>
<div class="t" style="right:589px;top:179.94px;font-size:13.3px;line-height:13.3px;color:#1e1e1e;text-align:right;">4,78</div>
<div class="t" style="right:439px;top:179.94px;font-size:13.3px;line-height:13.3px;color:#1e1e1e;text-align:right;">8,39</div>
<div class="t" style="right:289px;top:179.94px;font-size:13.3px;line-height:13.3px;color:#1e1e1e;text-align:right;">0,00</div>
<div class="t" style="right:139px;top:179.94px;font-size:13.3px;line-height:13.3px;color:#1e1e1e;text-align:right;">0,00</div>
<div class="t" style="right:-11px;top:179.94px;font-size:13.3px;line-height:13.3px;color:#1e1e1e;text-align:right;">5,00</div>
<div class="a" style="left:20px;top:198px;width:149px;height:21px;background:#80ff80;"></div>
<div class="a" style="left:0;top:219px;width:1510px;height:1px;background:#d3d3d3;"></div>
<div class="t" style="left:22px;top:201.94px;font-size:13.3px;line-height:13.3px;color:#1e1e1e;">AR2016041-009</div>
<div class="t" style="right:1219px;top:201.94px;font-size:13.3px;line-height:13.3px;color:#1e1e1e;text-align:right;">14</div>
<div class="t" style="left:297px;top:201.94px;font-size:13.3px;line-height:13.3px;color:#1e1e1e;">Herren-T-Shirt Rot L</div>
<div class="t" style="right:589px;top:201.94px;font-size:13.3px;line-height:13.3px;color:#1e1e1e;text-align:right;">4,78</div>
<div class="t" style="right:439px;top:201.94px;font-size:13.3px;line-height:13.3px;color:#1e1e1e;text-align:right;">8,39</div>
<div class="t" style="right:289px;top:201.94px;font-size:13.3px;line-height:13.3px;color:#1e1e1e;text-align:right;">0,00</div>
<div class="t" style="right:139px;top:201.94px;font-size:13.3px;line-height:13.3px;color:#1e1e1e;text-align:right;">0,00</div>
<div class="t" style="right:-11px;top:201.94px;font-size:13.3px;line-height:13.3px;color:#1e1e1e;text-align:right;">5,00</div>
<div class="a" style="left:20px;top:220px;width:149px;height:21px;background:#80ff80;"></div>
<div class="a" style="left:0;top:241px;width:1510px;height:1px;background:#d3d3d3;"></div>
<div class="t" style="left:22px;top:223.94px;font-size:13.3px;line-height:13.3px;color:#1e1e1e;">AR2016041-011</div>
<div class="t" style="right:1219px;top:223.94px;font-size:13.3px;line-height:13.3px;color:#1e1e1e;text-align:right;">15</div>
<div class="t" style="left:297px;top:223.94px;font-size:13.3px;line-height:13.3px;color:#1e1e1e;">Herren-T-Shirt Orange XL</div>
<div class="t" style="right:589px;top:223.94px;font-size:13.3px;line-height:13.3px;color:#1e1e1e;text-align:right;">4,78</div>
<div class="t" style="right:439px;top:223.94px;font-size:13.3px;line-height:13.3px;color:#1e1e1e;text-align:right;">8,39</div>
<div class="t" style="right:289px;top:223.94px;font-size:13.3px;line-height:13.3px;color:#1e1e1e;text-align:right;">0,00</div>
<div class="t" style="right:139px;top:223.94px;font-size:13.3px;line-height:13.3px;color:#1e1e1e;text-align:right;">0,00</div>
<div class="t" style="right:-11px;top:223.94px;font-size:13.3px;line-height:13.3px;color:#1e1e1e;text-align:right;">5,00</div>
<div class="a" style="left:20px;top:242px;width:149px;height:21px;background:#80ff80;"></div>
<div class="a" style="left:0;top:263px;width:1510px;height:1px;background:#d3d3d3;"></div>
<div class="t" style="left:22px;top:245.94px;font-size:13.3px;line-height:13.3px;color:#1e1e1e;">AR2016041-010</div>
<div class="t" style="right:1219px;top:245.94px;font-size:13.3px;line-height:13.3px;color:#1e1e1e;text-align:right;">16</div>
<div class="t" style="left:297px;top:245.94px;font-size:13.3px;line-height:13.3px;color:#1e1e1e;">Herren-T-Shirt Blau XL</div>
<div class="t" style="right:589px;top:245.94px;font-size:13.3px;line-height:13.3px;color:#1e1e1e;text-align:right;">4,78</div>
<div class="t" style="right:439px;top:245.94px;font-size:13.3px;line-height:13.3px;color:#1e1e1e;text-align:right;">8,39</div>
<div class="t" style="right:289px;top:245.94px;font-size:13.3px;line-height:13.3px;color:#1e1e1e;text-align:right;">0,00</div>
<div class="t" style="right:139px;top:245.94px;font-size:13.3px;line-height:13.3px;color:#1e1e1e;text-align:right;">0,00</div>
<div class="t" style="right:-11px;top:245.94px;font-size:13.3px;line-height:13.3px;color:#1e1e1e;text-align:right;">5,00</div>
<div class="a" style="left:20px;top:264px;width:149px;height:21px;background:#80ff80;"></div>
<div class="a" style="left:0;top:285px;width:1510px;height:1px;background:#d3d3d3;"></div>
<div class="t" style="left:22px;top:267.94px;font-size:13.3px;line-height:13.3px;color:#1e1e1e;">AR2016041-012</div>
<div class="t" style="right:1219px;top:267.94px;font-size:13.3px;line-height:13.3px;color:#1e1e1e;text-align:right;">17</div>
<div class="t" style="left:297px;top:267.94px;font-size:13.3px;line-height:13.3px;color:#1e1e1e;">Herren-T-Shirt Rot XL</div>
<div class="t" style="right:589px;top:267.94px;font-size:13.3px;line-height:13.3px;color:#1e1e1e;text-align:right;">4,78</div>
<div class="t" style="right:439px;top:267.94px;font-size:13.3px;line-height:13.3px;color:#1e1e1e;text-align:right;">8,39</div>
<div class="t" style="right:289px;top:267.94px;font-size:13.3px;line-height:13.3px;color:#1e1e1e;text-align:right;">0,00</div>
<div class="t" style="right:139px;top:267.94px;font-size:13.3px;line-height:13.3px;color:#1e1e1e;text-align:right;">0,00</div>
<div class="t" style="right:-11px;top:267.94px;font-size:13.3px;line-height:13.3px;color:#1e1e1e;text-align:right;">5,00</div>
<div class="a" style="left:20px;top:286px;width:149px;height:21px;background:#80ff80;"></div>
<div class="a" style="left:1076px;top:286px;width:149px;height:21px;background:#ffecec;"></div>
<div class="a" style="left:0;top:307px;width:1510px;height:1px;background:#d3d3d3;"></div>
<div class="t" style="left:22px;top:289.94px;font-size:13.3px;line-height:13.3px;color:#1e1e1e;">AR2016042-VKO</div>
<div class="t" style="right:1219px;top:289.94px;font-size:13.3px;line-height:13.3px;color:#1e1e1e;text-align:right;">18</div>
<div class="t" style="left:297px;top:289.94px;font-size:13.3px;line-height:13.3px;color:#1e1e1e;">Damen-T-Shirt</div>
<div class="t" style="right:589px;top:289.94px;font-size:13.3px;line-height:13.3px;color:#1e1e1e;text-align:right;">0,00</div>
<div class="t" style="right:439px;top:289.94px;font-size:13.3px;line-height:13.3px;color:#1e1e1e;text-align:right;">10,08</div>
<div class="t" style="right:289px;top:289.94px;font-size:13.3px;line-height:13.3px;color:#1e1e1e;text-align:right;">0,00</div>
<div class="t" style="right:139px;top:289.94px;font-size:13.3px;line-height:13.3px;color:#1e1e1e;text-align:right;">0,00</div>
<div class="t" style="right:-11px;top:289.94px;font-size:13.3px;line-height:13.3px;color:#1e1e1e;text-align:right;">0,00</div>
<div class="a" style="left:20px;top:308px;width:149px;height:21px;background:#80ff80;"></div>
<div class="a" style="left:0;top:329px;width:1510px;height:1px;background:#d3d3d3;"></div>
<div class="t" style="left:22px;top:311.94px;font-size:13.3px;line-height:13.3px;color:#1e1e1e;">AR2016042-001</div>
<div class="t" style="right:1219px;top:311.94px;font-size:13.3px;line-height:13.3px;color:#1e1e1e;text-align:right;">19</div>
<div class="t" style="left:297px;top:311.94px;font-size:13.3px;line-height:13.3px;color:#1e1e1e;">Damen-T-Shirt, Blau S</div>
<div class="t" style="right:589px;top:311.94px;font-size:13.3px;line-height:13.3px;color:#1e1e1e;text-align:right;">5,25</div>
<div class="t" style="right:439px;top:311.94px;font-size:13.3px;line-height:13.3px;color:#1e1e1e;text-align:right;">10,08</div>
<div class="t" style="right:289px;top:311.94px;font-size:13.3px;line-height:13.3px;color:#1e1e1e;text-align:right;">0,00</div>
<div class="t" style="right:139px;top:311.94px;font-size:13.3px;line-height:13.3px;color:#1e1e1e;text-align:right;">0,00</div>
<div class="t" style="right:-11px;top:311.94px;font-size:13.3px;line-height:13.3px;color:#1e1e1e;text-align:right;">0,00</div>
<div class="a" style="left:20px;top:330px;width:149px;height:21px;background:#80ff80;"></div>
<div class="a" style="left:0;top:351px;width:1510px;height:1px;background:#d3d3d3;"></div>
<div class="t" style="left:22px;top:333.94px;font-size:13.3px;line-height:13.3px;color:#1e1e1e;">AR2016042-002</div>
<div class="t" style="right:1219px;top:333.94px;font-size:13.3px;line-height:13.3px;color:#1e1e1e;text-align:right;">20</div>
<div class="t" style="left:297px;top:333.94px;font-size:13.3px;line-height:13.3px;color:#1e1e1e;">Damen-T-Shirt, Blau M</div>
<div class="t" style="right:589px;top:333.94px;font-size:13.3px;line-height:13.3px;color:#1e1e1e;text-align:right;">5,25</div>
<div class="t" style="right:439px;top:333.94px;font-size:13.3px;line-height:13.3px;color:#1e1e1e;text-align:right;">10,08</div>
<div class="t" style="right:289px;top:333.94px;font-size:13.3px;line-height:13.3px;color:#1e1e1e;text-align:right;">0,00</div>
<div class="t" style="right:139px;top:333.94px;font-size:13.3px;line-height:13.3px;color:#1e1e1e;text-align:right;">0,00</div>
<div class="t" style="right:-11px;top:333.94px;font-size:13.3px;line-height:13.3px;color:#1e1e1e;text-align:right;">0,00</div>
<div class="a" style="left:20px;top:352px;width:149px;height:21px;background:#80ff80;"></div>
<div class="a" style="left:0;top:373px;width:1510px;height:1px;background:#d3d3d3;"></div>
<div class="t" style="left:22px;top:355.94px;font-size:13.3px;line-height:13.3px;color:#1e1e1e;">AR2016042-003</div>
<div class="t" style="right:1219px;top:355.94px;font-size:13.3px;line-height:13.3px;color:#1e1e1e;text-align:right;">21</div>
<div class="t" style="left:297px;top:355.94px;font-size:13.3px;line-height:13.3px;color:#1e1e1e;">Damen-T-Shirt, Blau L</div>
<div class="t" style="right:589px;top:355.94px;font-size:13.3px;line-height:13.3px;color:#1e1e1e;text-align:right;">5,25</div>
<div class="t" style="right:439px;top:355.94px;font-size:13.3px;line-height:13.3px;color:#1e1e1e;text-align:right;">10,08</div>
<div class="t" style="right:289px;top:355.94px;font-size:13.3px;line-height:13.3px;color:#1e1e1e;text-align:right;">0,00</div>
<div class="t" style="right:139px;top:355.94px;font-size:13.3px;line-height:13.3px;color:#1e1e1e;text-align:right;">0,00</div>
<div class="t" style="right:-11px;top:355.94px;font-size:13.3px;line-height:13.3px;color:#1e1e1e;text-align:right;">0,00</div>
<div class="a" style="left:19px;top:0;width:1px;height:369px;background:#c9d2e0;"></div>
<div class="a" style="left:169px;top:0;width:1px;height:369px;background:#c9d2e0;"></div>
<div class="a" style="left:294px;top:0;width:1px;height:369px;background:#c9d2e0;"></div>
<div class="a" style="left:775px;top:0;width:1px;height:369px;background:#c9d2e0;"></div>
<div class="a" style="left:925px;top:0;width:1px;height:369px;background:#c9d2e0;"></div>
<div class="a" style="left:1075px;top:0;width:1px;height:369px;background:#c9d2e0;"></div>
<div class="a" style="left:1225px;top:0;width:1px;height:369px;background:#c9d2e0;"></div>
<div class="a" style="left:1375px;top:0;width:1px;height:369px;background:#c9d2e0;"></div>
<div class="a" style="left:0;top:0;width:19px;height:369px;background:#fff;"></div>
<div class="a" style="left:19px;top:0;width:1px;height:369px;background:#d3d3d3;"></div>
</div>
<div class="a" style="left:358px;top:271px;width:19px;height:1px;background:#d3d3d3;"></div>
<div class="a" style="left:358px;top:293px;width:19px;height:1px;background:#d3d3d3;"></div>
<div class="a" style="left:358px;top:315px;width:19px;height:1px;background:#d3d3d3;"></div>
<div class="a" style="left:358px;top:337px;width:19px;height:1px;background:#d3d3d3;"></div>
<div class="a" style="left:358px;top:359px;width:19px;height:1px;background:#d3d3d3;"></div>
<div class="a" style="left:358px;top:381px;width:19px;height:1px;background:#d3d3d3;"></div>
<div class="a" style="left:358px;top:403px;width:19px;height:1px;background:#d3d3d3;"></div>
<div class="a" style="left:358px;top:425px;width:19px;height:1px;background:#d3d3d3;"></div>
<div class="a" style="left:358px;top:447px;width:19px;height:1px;background:#d3d3d3;"></div>
<div class="a" style="left:358px;top:469px;width:19px;height:1px;background:#d3d3d3;"></div>
<div class="a" style="left:358px;top:491px;width:19px;height:1px;background:#d3d3d3;"></div>
<div class="a" style="left:358px;top:513px;width:19px;height:1px;background:#d3d3d3;"></div>
<div class="a" style="left:358px;top:535px;width:19px;height:1px;background:#d3d3d3;"></div>
<div class="a" style="left:358px;top:557px;width:19px;height:1px;background:#d3d3d3;"></div>
<div class="a" style="left:358px;top:579px;width:19px;height:1px;background:#d3d3d3;"></div>
<div class="a" style="left:358px;top:601px;width:19px;height:1px;background:#d3d3d3;"></div>
<svg class="a" style="left:358px;top:250px" width="19" height="21" viewBox="0 0 19 21"><path d="M8 5.8 L12.8 10.5 L8 15.2 Z" fill="#595959"/></svg>
<div class="a" style="left:1868px;top:250px;width:21px;height:369px;background:#f0f0f0;"></div>
<div class="a" style="left:1868px;top:271px;width:21px;height:32px;background:#c2c2c2;"></div>
<svg class="a" style="left:1868px;top:250px" width="21" height="21" viewBox="0 0 21 21"><path d="M6 13 L10.5 8.5 L15 13" fill="none" stroke="#555" stroke-width="2"/></svg>
<svg class="a" style="left:1868px;top:598px" width="21" height="21" viewBox="0 0 21 21"><path d="M6 8 L10.5 12.5 L15 8" fill="none" stroke="#555" stroke-width="2"/></svg>
<div class="a" style="left:377px;top:619px;width:1512px;height:21px;background:#f0f0f0;"></div>
<div class="a" style="left:399px;top:619px;width:1024px;height:21px;background:#c2c2c2;"></div>
<svg class="a" style="left:377px;top:619px" width="22" height="21" viewBox="0 0 22 21"><path d="M13 6 L8.5 10.5 L13 15" fill="none" stroke="#555" stroke-width="2"/></svg>
<svg class="a" style="left:1846px;top:619px" width="22" height="21" viewBox="0 0 22 21"><path d="M9 6 L13.5 10.5 L9 15" fill="none" stroke="#555" stroke-width="2"/></svg>
<div class="a" style="left:358px;top:640px;width:1531px;height:1px;background:#d5d5d5;"></div>
<div class="t" style="right:30px;top:651.74px;font-size:13.3px;line-height:13.3px;color:#1e1e1e;text-align:right;">166 Artikel</div>
<div class="a" style="left:357px;top:682px;width:80px;height:24px;background:linear-gradient(#f1f1f1,#e4e4e4);border:1px solid #a9a9a9;"></div>
<div class="t" style="left:368px;top:688.54px;font-size:13.3px;line-height:13.3px;color:#1e1e1e;">Artikel</div>
<svg class="a" style="left:412px;top:690px" width="12" height="10" viewBox="0 0 12 10"><path d="M1.5 2.5 L6 7 L10.5 2.5" fill="none" stroke="#555" stroke-width="2"/></svg>
<div class="a" style="left:444px;top:682px;width:102px;height:24px;background:linear-gradient(#f1f1f1,#e4e4e4);border:1px solid #a9a9a9;"></div>
<div class="t" style="left:196.0px;width:600px;top:688.54px;font-size:13.3px;line-height:13.3px;color:#1e1e1e;text-align:center;">Artikel anlegen<span style="letter-spacing:-1.1px">...</span></div>
<div class="a" style="left:553px;top:682px;width:80px;height:24px;background:linear-gradient(#f3f3f3,#ebebeb);border:1px solid #c6c6c6;"></div>
<div class="t" style="left:294.0px;width:600px;top:688.54px;font-size:13.3px;line-height:13.3px;color:#a3a3a3;text-align:center;">Löschen</div>
<div class="a" style="left:640px;top:682px;width:83px;height:24px;background:linear-gradient(#f1f1f1,#e4e4e4);border:1px solid #a9a9a9;"></div>
<div class="t" style="left:647px;top:688.54px;font-size:13.3px;line-height:13.3px;color:#1e1e1e;">Drucken</div>
<svg class="a" style="left:700px;top:690px" width="12" height="10" viewBox="0 0 12 10"><path d="M1.5 2.5 L6 7 L10.5 2.5" fill="none" stroke="#555" stroke-width="2"/></svg>
<div class="a" style="left:749px;top:682px;width:156px;height:24px;background:linear-gradient(#f3f3f3,#ebebeb);border:1px solid #c6c6c6;"></div>
<div class="t" style="left:528.0px;width:600px;top:688.54px;font-size:13.3px;line-height:13.3px;color:#a3a3a3;text-align:center;">Auf Einkaufsliste setzen<span style="letter-spacing:-1.1px">...</span></div>
<div class="a" style="left:911px;top:682px;width:198px;height:24px;background:linear-gradient(#f3f3f3,#ebebeb);border:1px solid #c6c6c6;"></div>
<div class="t" style="left:918px;top:688.54px;font-size:13.3px;line-height:13.3px;color:#a3a3a3;">Workflow-Ereignis auslösen</div>
<svg class="a" style="left:1086.5px;top:690px" width="12" height="10" viewBox="0 0 12 10"><path d="M1.5 2.5 L6 7 L10.5 2.5" fill="none" stroke="#ababab" stroke-width="2"/></svg>
<svg class="a" style="left:947px;top:725px" width="20" height="3" viewBox="0 0 20 3"><rect x="0.0" y="0" width="1.5" height="1.5" fill="#a8a8a8"/><rect x="2.5" y="0" width="1.5" height="1.5" fill="#a8a8a8"/><rect x="5.0" y="0" width="1.5" height="1.5" fill="#a8a8a8"/><rect x="7.5" y="0" width="1.5" height="1.5" fill="#a8a8a8"/><rect x="10.0" y="0" width="1.5" height="1.5" fill="#a8a8a8"/><rect x="12.5" y="0" width="1.5" height="1.5" fill="#a8a8a8"/><rect x="15.0" y="0" width="1.5" height="1.5" fill="#a8a8a8"/><rect x="17.5" y="0" width="1.5" height="1.5" fill="#a8a8a8"/></svg>
<div class="a" style="left:7px;top:756px;width:945px;height:221px;background:#fff;border:1px solid #a5a5a5;border-top:none;"></div>
<div class="a" style="left:7px;top:752px;width:947px;height:4px;background:#a9a9a9;"></div>
<div class="a" style="left:7px;top:728px;width:72px;height:24px;background:#a9a9a9;"></div>
<div class="t" style="left:-257px;width:600px;top:735.04px;font-size:13.3px;line-height:13.3px;color:#fff;text-align:center;">Bestände</div>
<div class="a" style="left:79px;top:730px;width:78px;height:21px;background:#fff;border:1px solid #a5a5a5;border-bottom:none;"></div>
<div class="t" style="left:-181.0px;width:600px;top:735.04px;font-size:13.3px;line-height:13.3px;color:#1e1e1e;text-align:center;">Lieferanten</div>
<div class="a" style="left:159px;top:730px;width:51px;height:21px;background:#fff;border:1px solid #a5a5a5;border-bottom:none;border-left:none;"></div>
<div class="t" style="left:-115.0px;width:600px;top:735.04px;font-size:13.3px;line-height:13.3px;color:#1e1e1e;text-align:center;">Preise</div>
<div class="a" style="left:211px;top:730px;width:94px;height:21px;background:#fff;border:1px solid #a5a5a5;border-bottom:none;border-left:none;"></div>
<div class="t" style="left:-41.5px;width:600px;top:735.04px;font-size:13.3px;line-height:13.3px;color:#1e1e1e;text-align:center;">Sonderpreise</div>
<div class="a" style="left:306px;top:730px;width:120px;height:21px;background:#fff;border:1px solid #a5a5a5;border-bottom:none;border-left:none;"></div>
<div class="t" style="left:66.5px;width:600px;top:735.04px;font-size:13.3px;line-height:13.3px;color:#1e1e1e;text-align:center;">Verknüpfte Artikel</div>
<svg class="a" style="left:935px;top:738px" width="14" height="8" viewBox="0 0 14 8"><path d="M1 1 H12 L6.5 7 Z" fill="#555"/></svg>
<div class="t" style="left:18px;top:767.14px;font-size:13.3px;line-height:13.3px;color:#1e1e1e;">Für diesen Artikel ist die Bestandführung nicht aktiviert.</div>
<div class="t" style="left:18px;top:786.64px;font-size:13.3px;line-height:13.3px;color:#1e1e1e;">Informationen zur Verfügbarkeit stehen daher nicht zur Verfügung.</div>
<div class="t" style="right:1070.7px;top:772.74px;font-size:13.3px;line-height:13.3px;color:#1e1e1e;text-align:right;">Auf Einkaufsliste:</div>
<div class="a" style="left:844px;top:766px;width:73px;height:26px;background:#fff;border:1px solid #a0a0a0;"></div>
<div class="t" style="left:850px;top:772.74px;font-size:13.3px;line-height:13.3px;color:#1e1e1e;">0,00</div>
<svg class="a" style="left:924px;top:770px" width="20" height="20" viewBox="0 0 20 20"><circle cx="10" cy="10" r="9.5" fill="#d7dfe8"/><path d="M10 5 V15 M5 10 H15" stroke="#fff" stroke-width="2.6"/></svg>
<svg class="a" style="left:18px;top:810.7px" width="18" height="18" viewBox="0 0 18 18"><circle cx="9" cy="9" r="8.4" fill="#fff" stroke="#444" stroke-width="0.9"/><circle cx="9" cy="9" r="5" fill="#1b1b1b"/></svg>
<div class="t" style="left:41px;top:813.24px;font-size:13.3px;line-height:13.3px;color:#1e1e1e;">Auf Lager:</div>
<div class="a" style="left:107px;top:806px;width:73px;height:26px;background:#fff;border:1px solid #a0a0a0;"></div>
<div class="t" style="left:113px;top:813.24px;font-size:13.3px;line-height:13.3px;color:#1e1e1e;">0,00</div>
<svg class="a" style="left:187px;top:809px" width="20" height="20" viewBox="0 0 20 20"><circle cx="10" cy="10" r="9.5" fill="#d7dfe8"/><path d="M10 5 V15 M5 10 H15" stroke="#fff" stroke-width="2.6"/></svg>
<svg class="a" style="left:209px;top:809px" width="20" height="20" viewBox="0 0 20 20"><circle cx="10" cy="10" r="9.5" fill="#d7dfe8"/><path d="M5 10 H15" stroke="#fff" stroke-width="2.6"/></svg>
<svg class="a" style="left:263px;top:810.7px" width="18" height="18" viewBox="0 0 18 18"><circle cx="9" cy="9" r="8.4" fill="#fff" stroke="#444" stroke-width="0.9"/></svg>
<div class="t" style="left:286px;top:813.24px;font-size:13.3px;line-height:13.3px;color:#1e1e1e;">Auf Lagerplätzen:</div>
<div class="a" style="left:395px;top:806px;width:73px;height:26px;background:#fff;border:1px solid #a0a0a0;"></div>
<div class="t" style="left:401px;top:813.24px;font-size:13.3px;line-height:13.3px;color:#1e1e1e;">0,00</div>
<svg class="a" style="left:508.70000000000005px;top:810.7px" width="18" height="18" viewBox="0 0 18 18"><circle cx="9" cy="9" r="8.4" fill="#fff" stroke="#444" stroke-width="0.9"/></svg>
<div class="t" style="left:532px;top:813.24px;font-size:13.3px;line-height:13.3px;color:#1e1e1e;">In Aufträgen:</div>
<div class="a" style="left:613px;top:806px;width:73px;height:26px;background:#fff;border:1px solid #a0a0a0;"></div>
<div class="t" style="left:619px;top:813.24px;font-size:13.3px;line-height:13.3px;color:#1e1e1e;">0,00</div>
<svg class="a" style="left:755px;top:810.7px" width="18" height="18" viewBox="0 0 18 18"><circle cx="9" cy="9" r="8.4" fill="#fff" stroke="#444" stroke-width="0.9"/></svg>
<div class="t" style="left:778px;top:813.24px;font-size:13.3px;line-height:13.3px;color:#1e1e1e;">Im Zulauf:</div>
<div class="a" style="left:842px;top:806px;width:73px;height:26px;background:#fff;border:1px solid #a0a0a0;"></div>
<div class="t" style="left:848px;top:813.24px;font-size:13.3px;line-height:13.3px;color:#1e1e1e;">0,00</div>
<div class="a" style="left:19px;top:840px;width:921px;height:124px;background:#fff;border:1px solid #d5d5d5;"></div>
<div class="a" style="left:20px;top:865px;width:920px;height:1px;background:#d5d5d5;"></div>
<div class="a" style="left:39px;top:841px;width:1px;height:24px;background:#dadada;"></div>
<div class="a" style="left:189px;top:841px;width:1px;height:24px;background:#dadada;"></div>
<div class="a" style="left:339px;top:841px;width:1px;height:24px;background:#dadada;"></div>
<div class="a" style="left:490px;top:841px;width:1px;height:24px;background:#dadada;"></div>
<div class="t" style="left:45px;top:846.44px;font-size:13.3px;line-height:13.3px;color:#1e1e1e;">Lagername</div>
<div class="t" style="left:195px;top:846.44px;font-size:13.3px;line-height:13.3px;color:#1e1e1e;">Bestand</div>
<div class="t" style="left:345px;top:846.44px;font-size:13.3px;line-height:13.3px;color:#1e1e1e;">Lagertyp</div>
<div class="t" style="left:180.5px;width:600px;top:905.06px;font-size:20px;line-height:20px;color:#777;text-align:center;">Keine Lagerbestände vorhanden</div>
<div class="a" style="left:959px;top:756px;width:944px;height:221px;background:#fff;border:1px solid #a5a5a5;border-top:none;"></div>
<div class="a" style="left:959px;top:752px;width:946px;height:4px;background:#0070c9;"></div>
<div class="a" style="left:959px;top:728px;width:105px;height:24px;background:#0070c9;"></div>
<div class="t" style="left:711.5px;width:600px;top:735.04px;font-size:13.3px;line-height:13.3px;color:#fff;text-align:center;">eBay-Vorlagen</div>
<div class="a" style="left:1064px;top:730px;width:165px;height:21px;background:#fff;border:1px solid #a5a5a5;border-bottom:none;"></div>
<div class="t" style="left:847.5px;width:600px;top:735.04px;font-size:13.3px;line-height:13.3px;color:#1e1e1e;text-align:center;">Attribute/Felder/Merkmale</div>
<div class="a" style="left:1231px;top:730px;width:131px;height:21px;background:#fff;border:1px solid #a5a5a5;border-bottom:none;border-left:none;"></div>
<div class="t" style="left:997.0px;width:600px;top:735.04px;font-size:13.3px;line-height:13.3px;color:#1e1e1e;text-align:center;">Eigene Übersichten</div>
<svg class="a" style="left:1886px;top:738px" width="14" height="8" viewBox="0 0 14 8"><path d="M1 1 H12 L6.5 7 Z" fill="#555"/></svg>
<div class="a" style="left:970px;top:766px;width:922px;height:168px;background:#fff;border:1px solid #d5d5d5;"></div>
<div class="a" style="left:971px;top:791px;width:922px;height:1px;background:#d5d5d5;"></div>
<div class="a" style="left:990px;top:767px;width:1px;height:24px;background:#dadada;"></div>
<div class="a" style="left:1140px;top:767px;width:1px;height:24px;background:#dadada;"></div>
<div class="a" style="left:1290px;top:767px;width:1px;height:24px;background:#dadada;"></div>
<div class="a" style="left:1440px;top:767px;width:1px;height:24px;background:#dadada;"></div>
<div class="a" style="left:1590px;top:767px;width:1px;height:24px;background:#dadada;"></div>
<div class="a" style="left:1740px;top:767px;width:1px;height:24px;background:#dadada;"></div>
<div class="a" style="left:1891px;top:767px;width:1px;height:24px;background:#dadada;"></div>
<div class="t" style="left:996px;top:772.84px;font-size:13.3px;line-height:13.3px;color:#1e1e1e;">eBay Konto</div>
<div class="t" style="left:1146px;top:772.84px;font-size:13.3px;line-height:13.3px;color:#1e1e1e;">Vorlagenname</div>
<div class="t" style="left:1296px;top:772.84px;font-size:13.3px;line-height:13.3px;color:#1e1e1e;">Angebotstitel</div>
<div class="t" style="left:1446px;top:772.84px;font-size:13.3px;line-height:13.3px;color:#1e1e1e;">Marktplatz</div>
<div class="t" style="left:1596px;top:772.84px;font-size:13.3px;line-height:13.3px;color:#1e1e1e;">Einzustellende</div>
<div class="t" style="left:1746px;top:772.84px;font-size:13.3px;line-height:13.3px;color:#1e1e1e;">Laufende</div>
<div class="t" style="left:1131px;width:600px;top:853.06px;font-size:20px;line-height:20px;color:#777;text-align:center;">Keine Vorlagen vorhanden</div>
<div class="a" style="left:970px;top:941px;width:126px;height:24px;background:linear-gradient(#f3f3f3,#ebebeb);border:1px solid #c6c6c6;"></div>
<div class="a" style="left:1055px;top:942px;width:1px;height:24px;background:#c6c6c6;"></div>
<div class="t" style="left:715px;width:600px;top:946.54px;font-size:13.3px;line-height:13.3px;color:#a0a0a0;text-align:center;">Bearbeiten<span style="letter-spacing:-1.1px">...</span></div>
<svg class="a" style="left:1070px;top:949px" width="12" height="10" viewBox="0 0 12 10"><path d="M2 3 L6 7 L10 3" fill="none" stroke="#909090" stroke-width="1.5"/></svg>
<div class="a" style="left:1103px;top:941px;width:114px;height:24px;background:linear-gradient(#f3f3f3,#ebebeb);border:1px solid #c6c6c6;"></div>
<div class="t" style="left:861.0px;width:600px;top:946.54px;font-size:13.3px;line-height:13.3px;color:#a3a3a3;text-align:center;">Vorlage anlegen <span style="letter-spacing:-1.1px">...</span></div>
<div class="a" style="left:1224px;top:941px;width:80px;height:24px;background:linear-gradient(#f3f3f3,#ebebeb);border:1px solid #c6c6c6;"></div>
<div class="t" style="left:965.0px;width:600px;top:946.54px;font-size:13.3px;line-height:13.3px;color:#a3a3a3;text-align:center;">Löschen<span style="letter-spacing:-1.1px">...</span></div>
<div class="a" style="left:1578px;top:941px;width:80px;height:24px;background:linear-gradient(#f1f1f1,#e4e4e4);border:1px solid #a9a9a9;"></div>
<div class="t" style="left:1319.0px;width:600px;top:946.54px;font-size:13.3px;line-height:13.3px;color:#1e1e1e;text-align:center;">?</div>
<div class="a" style="left:1666px;top:941px;width:227px;height:24px;background:linear-gradient(#f3f3f3,#ebebeb);border:1px solid #c6c6c6;"></div>
<div class="t" style="left:1480.5px;width:600px;top:946.54px;font-size:13.3px;line-height:13.3px;color:#a3a3a3;text-align:center;">eBay-Angebot aus Vorlage erstellen<span style="letter-spacing:-1.1px">...</span></div>
</body></html>
